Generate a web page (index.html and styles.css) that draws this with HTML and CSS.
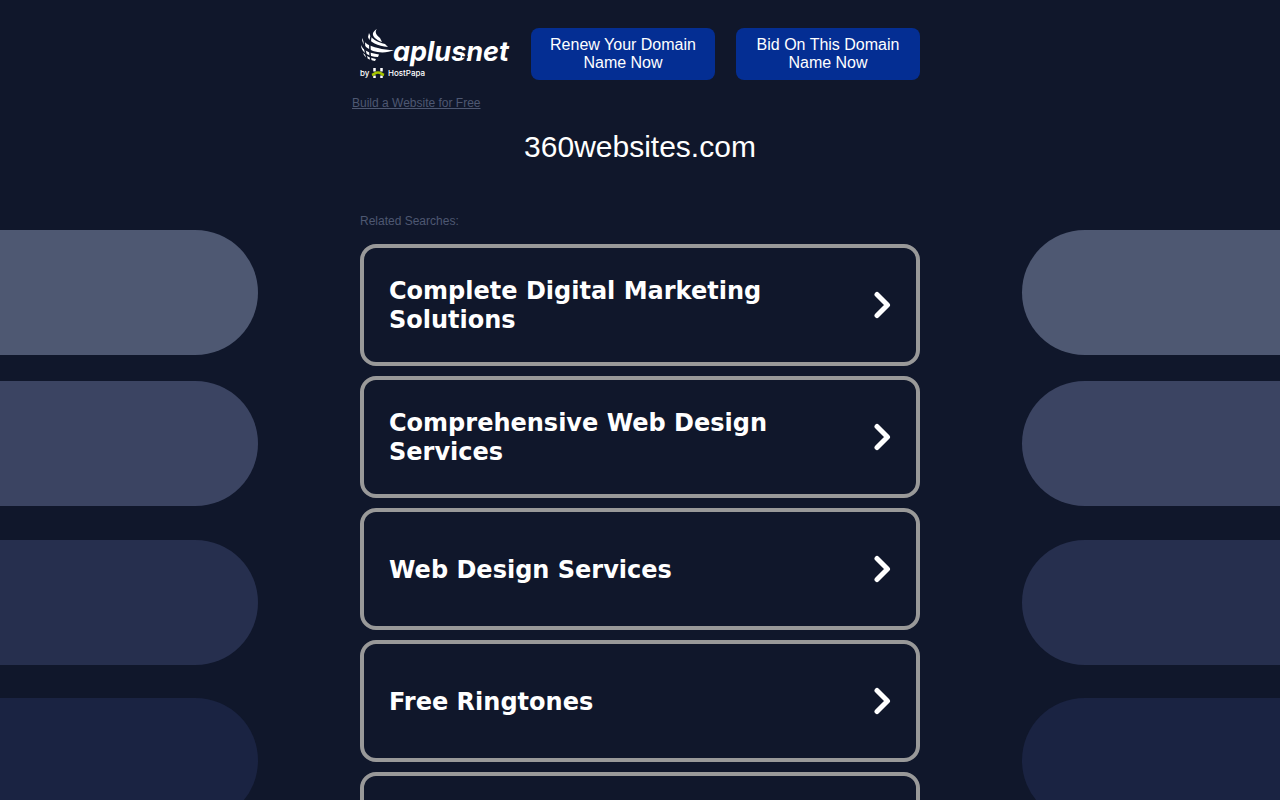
FILE: index.html
```html
<!DOCTYPE html>
<html lang="en">
<head>
<meta charset="utf-8">
<meta name="viewport" content="width=device-width, initial-scale=1">
<title>360websites.com</title>
<link rel="stylesheet" href="styles.css">
</head>
<body>
<div class="page">
  <div class="side side-left" aria-hidden="true">
    <div class="pill pill-1"></div>
    <div class="pill pill-2"></div>
    <div class="pill pill-3"></div>
    <div class="pill pill-4"></div>
  </div>
  <main class="content">
    <header class="header">
      <a class="logo" href="#" aria-label="aplusnet by HostPapa">
        <svg width="150" height="52" viewBox="0 0 150 52">
          <g fill="#fff">
            <path d="M17 1C15 3 15 6 20 10L22 14C16 12 12 8 13 5C14 3 15 2 17 1Z"/>
            <path d="M9 5C11 11 17 14 25 16L28 19C18 18 9 14 8 9Z"/>
            <path d="M2 10C4 15 9 18 18 20C23 21.500 28 22 34 22C28 25 19 25 13 23C6 20 2 16 2 10Z"/>
            <path d="M1 17C3 22 8 25 19 26.500L18 29C8 28.500 1 24 1 17Z"/>
            <path d="M3 25C6 28 10 30 16 31L15 33C9 32 5 30 3 25Z"/>
          </g>
          <path d="M12 4C10 11 9 22 11 34M4 11C4 17 5 24 7 31" stroke="#10172b" stroke-width="1.500" fill="none"/>
          <text class="wordmark" x="33" y="33">aplusnet</text>
          <path d="M102 29H108" stroke="#10172b" stroke-width="1.500"/>
          <text class="byline" x="0" y="48">by</text>
          <path d="M14.500 40V43.500M21.500 40V43.500M14.500 47.500V50M21.500 47.500V50" stroke="#fff" stroke-width="2.500"/>
          <path d="M12 47C15 46 15 44.500 18 44.500S21 46 24 47" stroke="#a5c400" stroke-width="2.500" fill="none"/>
          <text class="byline" x="28" y="48">HostPapa</text>
        </svg>
      </a>
      <a class="action" href="#">Renew Your Domain Name Now</a>
      <a class="action" href="#">Bid On This Domain Name Now</a>
    </header>
    <a class="build" href="#">Build a Website for Free</a>
    <h1 class="domain">360websites.com</h1>
    <p class="label">Related Searches:</p>
    <nav class="list" aria-label="Related searches">
      <a class="card" href="#"><span>Complete Digital Marketing Solutions</span><svg class="arrow" width="18" height="28" viewBox="0 0 18 28"><path d="M4 3.500L14.500 14L4 24.500"/></svg></a>
      <a class="card" href="#"><span>Comprehensive Web Design Services</span><svg class="arrow" width="18" height="28" viewBox="0 0 18 28"><path d="M4 3.500L14.500 14L4 24.500"/></svg></a>
      <a class="card" href="#"><span>Web Design Services</span><svg class="arrow" width="18" height="28" viewBox="0 0 18 28"><path d="M4 3.500L14.500 14L4 24.500"/></svg></a>
      <a class="card" href="#"><span>Free Ringtones</span><svg class="arrow" width="18" height="28" viewBox="0 0 18 28"><path d="M4 3.500L14.500 14L4 24.500"/></svg></a>
      <div class="card"></div>
    </nav>
  </main>
  <div class="side side-right" aria-hidden="true">
    <div class="pill pill-1"></div>
    <div class="pill pill-2"></div>
    <div class="pill pill-3"></div>
    <div class="pill pill-4"></div>
  </div>
</div>
</body>
</html>
```
FILE: styles.css
```css
* { box-sizing: border-box; }
body {
  margin: 0;
  background: #10172b;
  color: #fff;
  font-family: "Liberation Sans", Arial, sans-serif;
}
.page {
  display: grid;
  grid-template-columns: 1fr minmax(0, 576px) 1fr;
  height: 100vh;
  overflow: hidden;
}
.side { padding-top: 230px; }
.side-left { padding-right: 94px; }
.side-right { padding-left: 94px; }
.pill { height: 125px; }
.side-left .pill { border-radius: 0 63px 63px 0; }
.side-right .pill { border-radius: 63px 0 0 63px; }
.pill-1 { background: #4e5872; margin-bottom: 26px; }
.pill-2 { background: #3b4462; margin-bottom: 34px; }
.pill-3 { background: #262f4e; margin-bottom: 33px; }
.pill-4 { background: #1a2342; }
.content { padding-top: 28px; }
.header {
  display: flex;
  justify-content: space-between;
  padding: 0 8px;
}
.logo { display: block; height: 52px; }
.logo svg { display: block; overflow: visible; }
.wordmark {
  font: italic 700 27px Inter, sans-serif;
  fill: #fff;
}
.byline {
  font: 500 8px Inter, sans-serif;
  fill: #fff;
}
.action {
  width: 184px;
  padding: 8px 16px;
  border-radius: 8px;
  background: #042e93;
  color: #fff;
  font-size: 16px;
  line-height: 18px;
  text-align: center;
  text-decoration: none;
}
.build {
  display: block;
  width: fit-content;
  margin-top: 16px;
  color: #4e5872;
  font-size: 12px;
  line-height: 14px;
}
.domain {
  margin: 20px 0 0;
  font-size: 30px;
  font-weight: 400;
  line-height: 34px;
  text-align: center;
}
.label {
  margin: 50px 8px 0;
  color: #4e5872;
  font-size: 12px;
  line-height: 14px;
}
.list {
  display: grid;
  gap: 10px;
  margin: 16px 8px 0;
}
.card {
  display: flex;
  align-items: center;
  justify-content: space-between;
  gap: 48px;
  min-height: 122px;
  padding: 0 25px;
  border: 4px solid #999;
  border-radius: 16px;
  color: #fff;
  font: bold 24px/29px "DejaVu Sans", Verdana, sans-serif;
  text-decoration: none;
}
.card span { padding-top: 2px; }
.arrow {
  flex: none;
  fill: none;
  stroke: #fff;
  stroke-width: 5;
  stroke-linecap: round;
  stroke-linejoin: round;
}
```
